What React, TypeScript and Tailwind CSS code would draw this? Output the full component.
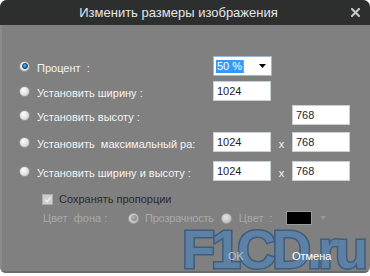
import React from 'react';

function Radio({ checked = false, disabled = false }: { checked?: boolean; disabled?: boolean }) {
  return (
    <div
      className={`w-[11px] h-[11px] shrink-0 rounded-full border flex items-center justify-center ${
        disabled
          ? 'border-[#a0a0a0] bg-[radial-gradient(circle_at_40%_35%,#e4e4e4,#b2b2b2)]'
          : 'border-[#969696] bg-[radial-gradient(circle_at_40%_35%,#ffffff,#c6c6c6)]'
      }`}
    >
      {checked && (
        <div
          className={`w-[6px] h-[6px] rounded-full ${
            disabled
              ? 'bg-[radial-gradient(circle_at_40%_35%,#b4b4b4,#7a7a7a)]'
              : 'bg-[radial-gradient(circle_at_40%_35%,#5fb6f0,#0b4f8e)] border border-[#0d3c66]'
          }`}
        />
      )}
    </div>
  );
}

function Field({ value }: { value: string }) {
  return (
    <div className="w-[58px] h-[20px] bg-white border border-[#c9d0d8] flex items-center pl-[3px] text-[11px] text-[#1c1c2c]">
      {value}
    </div>
  );
}

function Label({ children }: { children: React.ReactNode }) {
  return (
    <span className="pt-[5px] text-[11px] text-[#f4f4f4] whitespace-nowrap">{children}</span>
  );
}

export default function App() {
  return (
    <div className="w-[370px] h-[276px] bg-white relative overflow-hidden font-['Liberation_Sans',Arial,sans-serif]">
      <div className="h-[273px] flex flex-col rounded-t-[7px] rounded-b-[6px] overflow-hidden bg-[#808080]">
        {/* Title bar */}
        <div className="h-[25px] shrink-0 bg-[#2d2f2e] flex items-center justify-center pr-[13px] relative">
          <span className="text-[13px] text-[#e6e6e6]">Изменить размеры изображения</span>
          <svg className="absolute right-[10px] top-[8px]" width="9" height="9" viewBox="0 0 9 9">
            <path d="M1 1 L8 8 M8 1 L1 8" stroke="#c4c4c4" strokeWidth="2.2" strokeLinecap="square" />
          </svg>
        </div>

        {/* Body */}
        <div className="flex-1 flex flex-col border-l-2 border-l-[#8b8b8b] border-b-2 border-b-[#6b6b6b] pl-[17px] pt-[31px]">
          {/* Percent */}
          <div className="flex items-center h-[20px]">
            <div className="w-[194px] flex items-center gap-[7px]">
              <Radio checked />
              <Label>Процент&nbsp; :</Label>
            </div>
            <div className="w-[59px] h-[20px] bg-white border border-[#9fb8d2] flex items-center pl-[2px] pr-[5px]">
              <span className="bg-[#3399ff] text-white text-[11px] leading-[13px] px-[1px] border-r border-r-[#f08a24]">
                50 %
              </span>
              <svg className="ml-auto" width="7" height="4" viewBox="0 0 7 4">
                <path d="M0 0 H7 L3.5 4 Z" fill="#000" />
              </svg>
            </div>
          </div>

          {/* Width */}
          <div className="flex items-center h-[20px] mt-[5px]">
            <div className="w-[194px] flex items-center gap-[7px]">
              <Radio />
              <Label>Установить ширину :</Label>
            </div>
            <Field value="1024" />
          </div>

          {/* Height */}
          <div className="flex items-center h-[20px] mt-[4px]">
            <div className="w-[194px] flex items-center gap-[7px]">
              <Radio />
              <Label>Установить высоту :</Label>
            </div>
            <div className="w-[58px]" />
            <div className="w-[21px]" />
            <Field value="768" />
          </div>

          {/* Max size */}
          <div className="flex items-center h-[20px] mt-[7px]">
            <div className="w-[194px] flex items-center gap-[7px] overflow-hidden">
              <Radio />
              <Label>Установить&nbsp; максимальный ра:</Label>
            </div>
            <Field value="1024" />
            <div className="w-[21px] text-center pt-[4px] text-[11px] text-[#f4f4f4]">x</div>
            <Field value="768" />
          </div>

          {/* Width and height */}
          <div className="flex items-center h-[20px] mt-[9px]">
            <div className="w-[194px] flex items-center gap-[7px]">
              <Radio />
              <Label>Установить ширину и высоту :</Label>
            </div>
            <Field value="1024" />
            <div className="w-[21px] text-center pt-[4px] text-[11px] text-[#f4f4f4]">x</div>
            <Field value="768" />
          </div>

          {/* Keep proportions */}
          <div className="flex items-center h-[12px] mt-[12px] pl-[23px] gap-[6px]">
            <div className="w-[11px] h-[11px] bg-[#cdcdcd] border border-[#adadad] flex items-center justify-center">
              <svg width="8" height="7" viewBox="0 0 8 7">
                <path d="M1 3.5 L3 5.5 L7 1" stroke="#ececec" strokeWidth="1.6" fill="none" />
              </svg>
            </div>
            <span className="text-[11px] text-[#2a2a2a] pt-[1px]">Сохранять пропорции</span>
          </div>

          {/* Background colour */}
          <div className="flex items-center h-[14px] mt-[6px] pl-[24px] text-[11px] text-[#a9a9a9] whitespace-nowrap">
            <span className="w-[85px] pt-[1px]">Цвет&nbsp; фона :</span>
            <Radio checked disabled />
            <span className="ml-[6px] pt-[1px] tracking-[-0.2px]">Прозрачность</span>
            <div className="ml-[7px]">
              <Radio disabled />
            </div>
            <span className="ml-[7px] w-[47px] pt-[1px]">Цвет&nbsp; :</span>
            <div className="w-[26px] h-[14px] bg-black border border-[#9a9a9a]" />
            <svg className="ml-[8px]" width="6" height="4" viewBox="0 0 6 4">
              <path d="M0 0 H6 L3 4 Z" fill="#989898" />
            </svg>
          </div>

          {/* Buttons */}
          <div className="flex items-center h-[16px] mt-[23px] pl-[209px] text-[11px] relative z-10">
            <span className="text-[#a9c2da]">OK</span>
            <span className="ml-[48px] text-white">Отмена</span>
          </div>
        </div>
      </div>

      {/* Watermark */}
      <div className="absolute left-[182px] top-[222px] text-[54px] font-bold leading-none tracking-[-4px] text-[#5d81a5] [-webkit-text-stroke:3px_#3f5d7c] [paint-order:stroke_fill] select-none">
        F1CD.ru
      </div>
    </div>
  );
}
